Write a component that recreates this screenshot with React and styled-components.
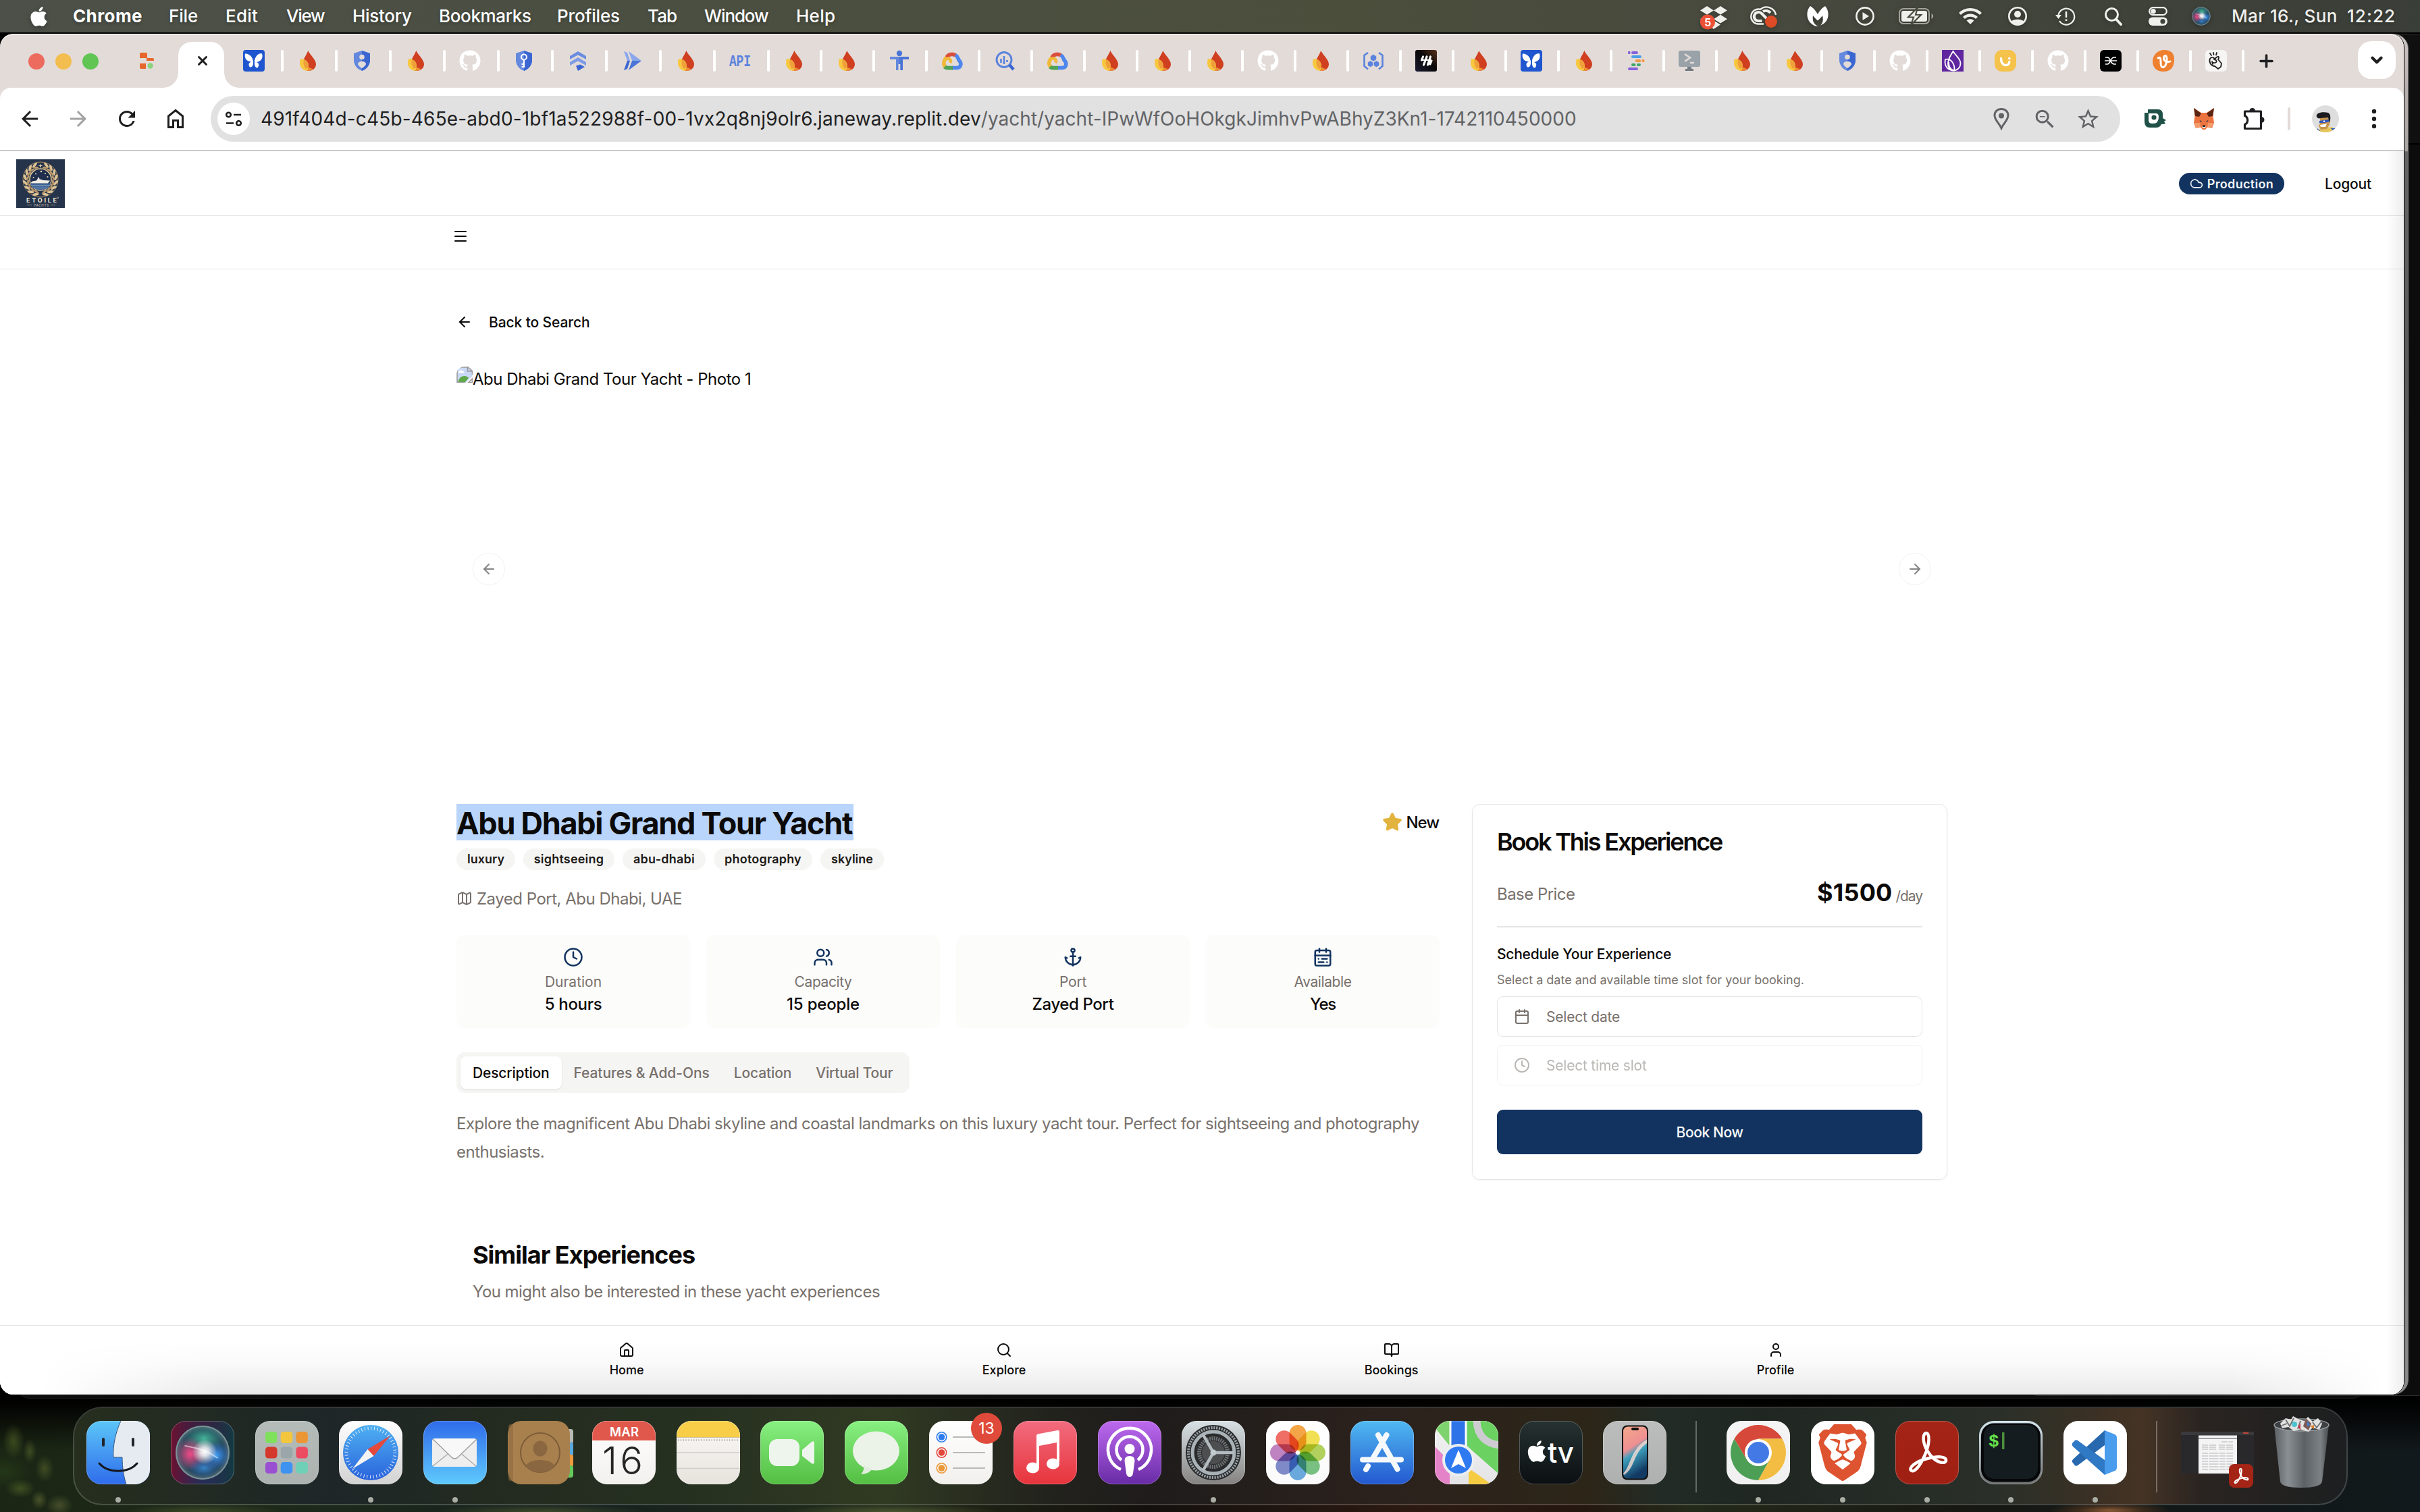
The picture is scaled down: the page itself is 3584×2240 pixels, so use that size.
import React from 'react';
import styled, { createGlobalStyle, css } from 'styled-components';
import { FaApple, FaGithub, FaDropbox } from 'react-icons/fa';
import { SiBrave } from 'react-icons/si';
import { MdArrowBack, MdArrowForward, MdRefresh, MdZoomOut, MdStarOutline } from 'react-icons/md';
import {
  Anchor, ArrowLeft, ArrowRight, BookOpen, Calendar, CalendarRange, Clock, Cloud, House, Map as MapIcon,
  Menu, Search, Star, User, Users, X, Plus, ChevronDown,
} from 'lucide-react';

const GlobalStyle = createGlobalStyle`
  * { box-sizing: border-box; }
  body { margin: 0; overflow: hidden; background: #000; font-family: Inter, "Liberation Sans", sans-serif; }
  h1, h2, h3, p { margin: 0; }
  button { font-family: inherit; }
  svg { display: block; flex: none; }
`;

const ink = '#0c0a09';
const muted = '#78716c';
const navy = '#12335f';
const line = '#e5e5e4';

/* ---------- desktop ---------- */

const Desktop = styled.div`
  position: relative;
  width: 3584px;
  height: 2240px;
  display: flex;
  flex-direction: column;
  overflow: hidden;
  background:
    radial-gradient(ellipse 90px 14px at 3125px 2238px, #8a5a35 0%, rgba(90, 58, 34, 0.6) 50%, transparent 100%),
    radial-gradient(ellipse 16px 26px at 20px 2135px, rgba(84, 102, 38, 0.6), transparent),
    radial-gradient(ellipse 10px 18px at 44px 2150px, rgba(98, 112, 48, 0.5), transparent),
    radial-gradient(ellipse 14px 20px at 66px 2176px, rgba(98, 112, 48, 0.5), transparent),
    radial-gradient(ellipse 22px 14px at 30px 2205px, rgba(70, 90, 36, 0.8), transparent),
    radial-gradient(ellipse 12px 14px at 58px 2222px, rgba(110, 118, 60, 0.55), transparent),
    radial-gradient(ellipse 20px 16px at 88px 2230px, rgba(96, 104, 56, 0.6), transparent),
    radial-gradient(ellipse 40px 26px at 6px 2180px, rgba(36, 56, 24, 0.9), transparent),
    radial-gradient(ellipse 120px 12px at 300px 2240px, rgba(70, 82, 44, 0.8), transparent),
    radial-gradient(ellipse 160px 12px at 800px 2240px, rgba(70, 84, 46, 0.8), transparent),
    radial-gradient(ellipse 160px 12px at 1320px 2240px, rgba(84, 96, 56, 0.8), transparent),
    linear-gradient(to bottom, #000 0, #000 2072px, rgba(0, 0, 0, 0.85) 2086px, transparent 2150px),
    linear-gradient(to right, #1b2614 0, #1d2a1a 400px, #16211f 900px, #222c18 1300px, #14100d 1700px, #2c1a12 2100px,
      #241710 2350px, #232a1a 2500px, #171812 2900px, #121818 3250px, #12191c 3584px);
`;

const MenuBar = styled.header`
  flex: none;
  height: 48px;
  display: flex;
  align-items: center;
  padding-left: 41px;
  color: #fff;
  background: linear-gradient(to right, #4c5048 0, #4b4f41 1000px, #4b4e3b 2000px, #484a3f 2600px, #40433a 3100px, #3a3e38 3584px);
`;

const MenuApple = styled.span`
  width: 67px;
  filter: drop-shadow(0 2px 3px rgba(0, 0, 0, 0.3));
`;

const MenuItem = styled.span`
  width: ${(p) => p.$w}px;
  font-size: 26px;
  line-height: 48px;
  font-weight: ${(p) => (p.$bold ? 700 : 500)};
  letter-spacing: ${(p) => p.$ls}em;
  white-space: pre;
  text-shadow: 0 2px 4px rgba(0, 0, 0, 0.3);
`;

const StatusItems = styled.div`
  margin-left: auto;
  display: flex;
  align-items: center;
  color: #efefec;
`;

const StatusIcon = styled.span`
  width: ${(p) => p.$w}px;
  margin-right: ${(p) => p.$gap}px;
  filter: drop-shadow(0 2px 3px rgba(0, 0, 0, 0.25));
`;

const menus = [
  ['Chrome', 142, 0.015, true],
  ['File', 84, -0.005],
  ['Edit', 90, 0.009],
  ['View', 98, -0.049],
  ['History', 128, -0.011],
  ['Bookmarks', 175, -0.014],
  ['Profiles', 134, -0.007],
  ['Tab', 84, -0.035],
  ['Window', 136, -0.043],
  ['Help', 60, 0.01],
];

const DropboxStatus = () => (
  <svg width="38" height="40" viewBox="0 0 38 40" overflow="visible">
    <FaDropbox x="-1" y="2" size={40} />
    <circle cx="10" cy="28.500" r="11" fill="#ec5037" />
    <text x="10" y="34.500" fontSize="16" fontWeight="700" textAnchor="middle" fill="#fff" fontFamily="Inter, sans-serif">5</text>
  </svg>
);

const CloudStatus = () => (
  <svg width="40" height="34" viewBox="0 0 40 34" fill="none" stroke="currentColor" strokeWidth="3">
    <path d="M20 28.500 H13 A11 11 0 1 1 15.500 7" strokeWidth="2.400" />
    <path d="M15 7 A14 14 0 0 1 38 15" strokeWidth="2.400" />
    <path d="M17.500 24 H13 A6.500 6.500 0 1 1 17 13 L24 20" strokeWidth="4" />
    <path d="M19 10 A9 9 0 0 1 30 12" strokeWidth="4" />
    <circle cx="31" cy="25" r="9" fill="#dc4b25" stroke="none" />
  </svg>
);

const MalwareStatus = () => (
  <svg width="32" height="30" viewBox="0 0 32 30" fill="#fff">
    <path d="M5 0 C-2 7 -2 24 12 29.500 C14 30 16 30 17 29.800 C9 27 8 20 9 14 C11 17 14 20 16 21.500 C18 20 21 17 23 14 C24.500 20 24 25 20 28.500 C34 24 34 7 27 0 C23 2 18 8 16 12 C14 8 9 2 5 0Z" />
  </svg>
);

const PlayStatus = () => (
  <svg width="28" height="28" viewBox="0 0 28 28">
    <circle cx="14" cy="14" r="12.600" fill="none" stroke="currentColor" strokeWidth="2.600" />
    <path d="M10.500 8 L20 14 L10.500 20Z" fill="currentColor" />
  </svg>
);

const BatteryStatus = () => (
  <svg width="52" height="26" viewBox="0 0 52 26">
    <rect x="1" y="2" width="44" height="22" rx="6" fill="none" stroke="#a3a59c" strokeWidth="2" />
    <path d="M48.500 9 C52 11 52 15 48.500 17Z" fill="#a3a59c" />
    <rect x="4" y="5" width="38" height="16" rx="3" fill="currentColor" />
    <path d="M28 0 L14 14.500 H22 L18 26 L33 11 H25Z" fill="currentColor" stroke="#474a3f" strokeWidth="2.200" />
  </svg>
);

const WifiStatus = () => (
  <svg width="34" height="26" viewBox="0 0 34 26" fill="none" stroke="currentColor" strokeWidth="4.200">
    <path d="M1.500 9.500 A22 22 0 0 1 32.500 9.500" />
    <path d="M7.500 15.500 A13.500 13.500 0 0 1 26.500 15.500" />
    <path d="M11.500 19.500 A8 8 0 0 1 22.500 19.500 L17 25Z" fill="currentColor" stroke="none" />
  </svg>
);

const AccountStatus = () => (
  <svg width="28" height="28" viewBox="0 0 28 28">
    <circle cx="14" cy="14" r="12.700" fill="none" stroke="currentColor" strokeWidth="2.600" />
    <circle cx="14" cy="11" r="5" fill="currentColor" />
    <path d="M4 22.500 C7 17.500 21 17.500 24 22.500 A13 13 0 0 1 4 22.500Z" fill="currentColor" />
  </svg>
);

const TimeMachineStatus = () => (
  <svg width="30" height="28" viewBox="0 0 30 28" fill="none" stroke="currentColor" strokeWidth="2.200">
    <path d="M4.500 12 A12 12 0 1 1 6 21" />
    <path d="M0 12 H9 L4.500 18Z" fill="currentColor" stroke="none" />
    <path d="M16 7 V16 M16 18.500 V21" strokeWidth="2.600" />
  </svg>
);

const SearchStatus = () => (
  <svg width="26" height="28" viewBox="0 0 26 28" fill="none" stroke="currentColor" strokeWidth="3">
    <circle cx="10.500" cy="11.500" r="9" />
    <path d="M17 18.500 L24 26" strokeWidth="4" strokeLinecap="round" />
  </svg>
);

const ControlStatus = () => (
  <svg width="28" height="28" viewBox="0 0 28 28">
    <rect x="1.200" y="1.200" width="25.600" height="11" rx="5.500" fill="none" stroke="currentColor" strokeWidth="2.200" />
    <circle cx="7" cy="6.700" r="3.800" fill="currentColor" />
    <rect x="0" y="15.500" width="28" height="12.500" rx="6.200" fill="currentColor" />
    <circle cx="21" cy="21.700" r="3.600" fill="#40433a" />
  </svg>
);

const SiriOrb = ({ size }) => (
  <svg width={size} height={size} viewBox="0 0 80 80">
    <defs>
      <radialGradient id="orbBase" cx="50%" cy="50%" r="50%">
        <stop offset="0" stopColor="#3b3f5c" />
        <stop offset="0.800" stopColor="#24485a" />
        <stop offset="1" stopColor="#5b6a7c" />
      </radialGradient>
      <radialGradient id="orbPink"><stop offset="0" stopColor="#f04a86" /><stop offset="1" stopColor="#f04a86" stopOpacity="0" /></radialGradient>
      <radialGradient id="orbBlue"><stop offset="0" stopColor="#3fa0f5" /><stop offset="1" stopColor="#2f6fe0" stopOpacity="0" /></radialGradient>
      <radialGradient id="orbTeal"><stop offset="0" stopColor="#45b59a" /><stop offset="1" stopColor="#2f8f80" stopOpacity="0" /></radialGradient>
      <radialGradient id="orbWhite"><stop offset="0" stopColor="#fff" /><stop offset="0.350" stopColor="#fff" stopOpacity="0.800" /><stop offset="1" stopColor="#fff" stopOpacity="0" /></radialGradient>
    </defs>
    <circle cx="40" cy="40" r="39" fill="url(#orbBase)" />
    <ellipse cx="42" cy="20" rx="30" ry="20" fill="url(#orbTeal)" />
    <ellipse cx="22" cy="42" rx="22" ry="24" fill="url(#orbPink)" />
    <ellipse cx="60" cy="44" rx="20" ry="20" fill="url(#orbBlue)" />
    <ellipse cx="42" cy="62" rx="22" ry="14" fill="url(#orbBlue)" opacity="0.700" />
    <circle cx="43" cy="39" r="18" fill="url(#orbWhite)" />
    <path d="M14 30 C34 34 44 36 62 48" stroke="#fff" strokeOpacity="0.500" strokeWidth="2" fill="none" />
    <circle cx="40" cy="40" r="38" fill="none" stroke="#8fb3a8" strokeOpacity="0.600" strokeWidth="2" />
  </svg>
);

/* ---------- windows ---------- */

const BackWindow = styled.div`
  position: absolute;
  left: ${(p) => p.$x}px;
  top: ${(p) => p.$y}px;
  width: ${(p) => p.$w}px;
  height: ${(p) => p.$h}px;
  background: ${(p) => p.$bg};
  border-radius: ${(p) => p.$r || 20}px;
  border: 1px solid ${(p) => p.$edge || '#2c2c2c'};
`;

const BrowserWindow = styled.section`
  position: relative;
  flex: none;
  width: 3560px;
  height: 2016px;
  margin-top: 2px;
  display: flex;
  flex-direction: column;
  overflow: hidden;
  border-radius: 20px;
  background: #e3dbd8;
  box-shadow: inset 0 2px 0 #efeae8, 1px 0 0 #000;
`;

const TabStrip = styled.div`
  flex: none;
  height: 80px;
  display: flex;
  align-items: center;
  padding-left: 42px;
`;

const TrafficLights = styled.div`
  display: flex;
  gap: 16px;
  margin-right: 61px;
  padding-top: 2px;
`;

const Light = styled.span`
  width: 24px;
  height: 24px;
  border-radius: 50%;
  background: ${(p) => p.$c};
`;

const flare = css`
  content: '';
  position: absolute;
  bottom: 0;
  width: 22px;
  height: 22px;
`;

const ActiveTab = styled.div`
  position: relative;
  align-self: flex-end;
  width: 68px;
  height: 68px;
  margin: 0 28px 0 36px;
  padding: 0 0 12px 4px;
  display: flex;
  align-items: center;
  justify-content: center;
  border-radius: 20px 20px 0 0;
  background: #fff;
  color: #1f1f1f;
  &::before { ${flare} left: -22px; background: radial-gradient(circle at 0 0, transparent 21.500px, #fff 22px); }
  &::after { ${flare} right: -22px; background: radial-gradient(circle at 100% 0, transparent 21.500px, #fff 22px); }
`;

const PinnedTab = styled.div`
  display: flex;
  align-items: center;
  width: ${(p) => (p.$tight ? 78 : 80)}px;
  gap: ${(p) => (p.$tight ? 22 : 24)}px;
  &::after { content: ''; width: 4px; height: 32px; border-radius: 2px; background: #fff; }
`;

const NewTab = styled.span`
  margin-left: -2px;
  color: #1f1f22;
`;

const TabSearch = styled.button`
  margin: -2px 12px 0 auto;
  width: 56px;
  height: 56px;
  display: grid;
  place-items: center;
  border: 0;
  padding: 0;
  border-radius: 20px;
  background: #fff;
  color: #1f1f1f;
`;

const Toolbar = styled.div`
  flex: none;
  height: 94px;
  display: flex;
  align-items: center;
  padding: 0 0 0 26px;
  border-bottom: 2px solid #cacaca;
  border-radius: 16px 16px 0 0;
  background: #fff;
  color: #1f1f1f;
`;

const NavIcon = styled.span`
  width: 36px;
  margin-right: 36px;
  color: ${(p) => (p.$off ? '#a2a2a2' : '#1f1f1f')};
`;

const Omnibox = styled.div`
  width: 2828px;
  height: 68px;
  margin-left: -2px;
  padding-left: 10px;
  display: flex;
  align-items: center;
  border-radius: 34px;
  background: #e1e1e1;
`;

const SiteInfo = styled.span`
  width: 48px;
  height: 48px;
  display: grid;
  place-items: center;
  border-radius: 50%;
  background: #fff;
`;

const Url = styled.span`
  margin-left: 16px;
  font-size: 28px;
  line-height: 68px;
  white-space: nowrap;
  color: #1f1f22;
  letter-spacing: 0.0061em;
  em { font-style: normal; color: #626366; letter-spacing: 0.0007em; }
`;

const OmniIcons = styled.div`
  margin-left: auto;
  padding-right: 29px;
  display: flex;
  align-items: center;
  gap: 27px;
  color: #626366;
  svg:first-child { margin-right: 7px; }
`;

const Extensions = styled.div`
  display: flex;
  align-items: center;
  padding-left: 36px;
`;

const Ext = styled.span`
  margin-right: ${(p) => p.$gap}px;
`;

const ToolDivider = styled.span`
  width: 4px;
  height: 34px;
  margin-right: 32px;
  border-radius: 2px;
  background: #e3dbd8;
`;

/* ---------- favicons ---------- */

const Fire = () => (
  <svg width="32" height="32" viewBox="0 0 32 32">
    <path d="M16.300 1 C18 6 28 14 28 21 C28 27 23 31 17 31 C11 31 8 27 8 21 C8 14 14 8 16.300 1Z" fill="#cf3f20" />
    <path d="M6 13 C13 13 17 18 17 24 C17 28 16 30 15 31 C8 30 4 26 4 19 C4 15 5 13 6 13Z" fill="#f7c740" />
    <path d="M10 14 C15 16 17.500 20 17 26 C17 28 16 30 15.500 31 C20 31 21 30 24 28 C20 27.500 19 26 17 26 C16 20 13 16 10 14Z" fill="#ee9135" />
    <path d="M10 14 C9 18 9 23 13 28 C15 27 17 27 17 24 C17 19 14 15 10 14Z" fill="#f0a03a" />
  </svg>
);
const shield = 'M16 1 L28 5 V15 C28 23 22 29 16 31 C10 29 4 23 4 15 V5Z';
const ShieldUser = () => (
  <svg width="32" height="32" viewBox="0 0 32 32">
    <path d={shield} fill="#6388dd" /><path d="M16 1 L28 5 V15 C28 23 22 29 16 31Z" fill="#3b66d1" />
    <circle cx="16" cy="10.500" r="3.800" fill="#e3dbd8" /><path d="M10 21 C10 15.500 22 15.500 22 21 C20 25 17 26.500 16 27 C15 26.500 12 25 10 21Z" fill="#e3dbd8" />
  </svg>
);
const ShieldKey = () => (
  <svg width="32" height="32" viewBox="0 0 32 32">
    <path d={shield} fill="#6388dd" /><path d="M16 1 L28 5 V15 C28 23 22 29 16 31Z" fill="#3b66d1" />
    <circle cx="16" cy="10.500" r="4" fill="none" stroke="#fff" strokeWidth="2.200" />
    <path d="M16 14.500 V26 M16 21 H12.500 M16 25 H12.500" stroke="#fff" strokeWidth="2.200" />
  </svg>
);
const Octocat = () => <FaGithub size={32} color="#fff" />;
const Butterfly = () => (
  <svg width="32" height="32" viewBox="0 0 32 32">
    <rect width="32" height="32" rx="4" fill="#1f56cf" />
    <path d="M15.300 18 C15 12 10 5 3 5.500 C1.500 12 5 17 12 17.500 C8 19 7.500 22 10 25.500 C13.500 26 15 23 15.300 18Z M16.700 18 C17 11 22 4 28 5.500 C30 12 27 17 20 18 C24 19.500 24 23 21.500 26.500 C18 27 17 23 16.700 18Z" fill="#fff" />
    <path d="M16 17 L14 8 M16 17 V29" stroke="#1f56cf" strokeWidth="1.800" />
  </svg>
);
const Layers = () => (
  <svg width="32" height="32" viewBox="0 0 32 32">
    <path d="M4 9 L16 2 L28 9 V14 L16 7.500 L4 14Z" fill="#6a8de0" /><path d="M4 18 L16 11 L28 18 V23 L16 16.500 L4 23Z" fill="#7d9ce5" />
    <path d="M13 23.500 L19 21.500 L26 25 L16 31 Z" fill="#3b66d1" />
  </svg>
);
const FastForward = () => (
  <svg width="32" height="32" viewBox="0 0 32 32">
    <path d="M4 2 L9 4 L13 16 H9Z" fill="#8aa7ec" /><path d="M4 30 L9 28 L13 16 H9Z" fill="#3b66d1" />
    <path d="M11 2 L30 16 H16Z" fill="#8aa7ec" /><path d="M11 30 L30 16 H16Z" fill="#4a74d6" />
  </svg>
);
const Api = () => (
  <svg width="32" height="32" viewBox="0 0 32 32">
    <text transform="scale(1 1.350)" x="0" y="18" fontSize="18" fontWeight="700" fontFamily="'Liberation Mono', monospace" fill="#5b83dd" textLength="32">API</text>
  </svg>
);
const Figure = () => (
  <svg width="32" height="32" viewBox="0 0 32 32" fill="#4a74d6">
    <circle cx="16" cy="5" r="4.200" /><path d="M2 10 H30 V14 H21 V30 H17.500 V21 H14.500 V30 H11 V14 H2Z" fill="#6388dd" /><path d="M16 10 H30 V14 H21 V30 H17.500 V21 H16Z" />
  </svg>
);
const GCloud = () => (
  <svg width="32" height="32" viewBox="0 0 32 32" fill="none" strokeWidth="5.600">
    <path d="M7.500 12 A9 9 0 0 1 21 8" stroke="#d94f3d" /><path d="M21 7.500 C25 10 25 13 26 15 C31 20 29 26.500 23 26.500 H16" stroke="#4d86ec" />
    <path d="M8 12 C4 14 2 21 6 25" stroke="#f0b93b" /><path d="M5 25 C7 27 10 26.600 17 26.600" stroke="#4fa353" /><path d="M8 13.500 C11 11 16 15 13 19" stroke="#f0b93b" strokeWidth="4.500" />
  </svg>
);
const Query = () => (
  <svg width="32" height="32" viewBox="0 0 32 32" fill="none" stroke="#5b83dd">
    <circle cx="15" cy="14.500" r="11" strokeWidth="3" /><path d="M23 22 L29 29" strokeWidth="4.500" stroke="#3b66d1" /><path d="M10.500 13 V19 M15 9 V21 M19.500 15 V18" strokeWidth="2.600" />
  </svg>
);
const Artifact = () => (
  <svg width="32" height="32" viewBox="0 0 32 32" fill="none" stroke="#5b83dd" strokeWidth="2.600">
    <path d="M8 4 L2.500 8 V24 L8 28.500 M24 4 L29.500 8 V24 L24 28.500" /><path d="M16 7 L20 9.500 V14 L16 16.500 L12 14 V9.500Z M11.500 16.500 L15 18.500 V23 L11.500 25 L8 23 V18.500Z M20.500 16.500 L24 18.500 V23 L20.500 25 L17 23 V18.500Z" fill="#5b83dd" strokeWidth="0.500" />
  </svg>
);
const DarkMark = () => (
  <svg width="32" height="32" viewBox="0 0 32 32">
    <defs><linearGradient id="dm" x1="1" y1="0" x2="0" y2="1"><stop offset="0" stopColor="#5a331a" /><stop offset="0.450" stopColor="#0a0808" /><stop offset="1" stopColor="#1b1a33" /></linearGradient></defs>
    <rect width="32" height="32" rx="3" fill="url(#dm)" /><path d="M11.500 10 L9.500 15 M17 10 L12.500 22 M22.500 10 L18.500 22 M24 16 L22 21" stroke="#fff" strokeWidth="3.200" strokeLinecap="round" /><path d="M8.500 15 H23" stroke="#fff" strokeWidth="1.800" />
  </svg>
);
const Logs = () => (
  <svg width="32" height="32" viewBox="0 0 32 32">
    <rect x="3" y="2" width="3.500" height="4" rx="1" fill="#8562dd" /><rect x="8" y="2" width="10" height="4" rx="2" fill="#8562dd" /><rect x="8" y="8" width="15" height="4" rx="2" fill="#4b9fe8" />
    <rect x="14" y="14" width="8" height="4" rx="1.500" fill="#f2994a" /><rect x="23.500" y="14" width="4" height="4" rx="1" fill="#f2994a" />
    <rect x="8" y="20" width="6.500" height="4" rx="2" fill="#3fa66a" /><rect x="16" y="20" width="6" height="4" rx="2" fill="#3fa66a" /><rect x="3" y="26" width="15" height="4" rx="2" fill="#8562dd" />
  </svg>
);
const Monitor = () => (
  <svg width="32" height="32" viewBox="0 0 32 32">
    <rect x="0" y="1" width="32" height="24" rx="3" fill="#9aa2a9" /><path d="M13 25 H19 V28 H22 V31 H10 V28 H13Z" fill="#737b82" />
    <path d="M9 6 L17 11.500 L9 17" fill="none" stroke="#e3dbd8" strokeWidth="2.600" /><path d="M17 19 H23" stroke="#e3dbd8" strokeWidth="2.600" />
  </svg>
);
const PurpleDrop = () => (
  <svg width="32" height="32" viewBox="0 0 32 32">
    <rect width="32" height="32" fill="#5f269f" />
    <g fill="none" stroke="#fff" strokeWidth="1.800"><path d="M16.500 2 C13 8 9 13 9 20 C9 27 13 30.500 17 30.500 C23 30.500 27.500 26 27.500 19.500 C27.500 13 20 8 16.500 2Z" /><path d="M5 14 C13 12 19 20 18.500 30 C9 31 3 24 5 14Z" /><path d="M10 18 C10 24 12 28 16 30" /></g>
  </svg>
);
const Smile = () => (
  <svg width="32" height="32" viewBox="0 0 32 32"><rect width="32" height="32" rx="11" fill="#f5c24c" /><path d="M9.500 12.500 C9.500 25 21.500 25 21.800 17.500" fill="none" stroke="#fff" strokeWidth="3.400" strokeLinecap="round" /><circle cx="21.800" cy="12.600" r="1.900" fill="#fff" /></svg>
);
const BlackMark = () => (
  <svg width="32" height="32" viewBox="0 0 32 32"><rect width="32" height="32" rx="6" fill="#000" /><path d="M8 11 H11 C16 11 15 21 21 21 H24 M8 21 H11 C16 21 15 11 21 11 H24 M7 16 H25" fill="none" stroke="#fff" strokeWidth="1.700" /></svg>
);
const OrangeMark = () => (
  <svg width="32" height="32" viewBox="0 0 32 32"><path d="M17 0 C26 0 32 4 32 14 C32 25 27 32 16 32 C6 32 0 26 0 17 C0 8 7 0 17 0Z" fill="#ee8030" /><path d="M8 12 C11 10 12 12 12 17 C12 25 14 27 17 25 C21 22 22 12 20 9 C17 7 15 13 18 16 C20 18 24 18 26 17" fill="none" stroke="#fff" strokeWidth="3" strokeLinecap="round" /></svg>
);
const HandMark = () => (
  <svg width="32" height="32" viewBox="0 0 32 32"><rect width="32" height="32" rx="6" fill="#f7f5f3" /><g fill="none" stroke="#222" strokeWidth="1.800" strokeLinecap="round" strokeLinejoin="round"><path d="M7 5 L9 8 M12 4 L12.500 7 M17 4 L16 7.500" /><path d="M7 13 C9 10 12 11 14 13 L18 10 C21 9 20 13 19 14 L24 20 L23 25 L19 28 M7 13 C5 17 8 24 14 24 L19 28 M13 14 C18 15 18 20 12 19 M10 17 L11 21" /></g></svg>
);

const pinned = [
  Butterfly, Fire, ShieldUser, Fire, Octocat, ShieldKey, Layers, FastForward, Fire, Api, Fire, Fire, Figure, GCloud, Query,
  GCloud, Fire, Fire, Fire, Octocat, Fire, Artifact, DarkMark, Fire, Butterfly, Fire, Logs, Monitor, Fire, Fire, ShieldUser,
  Octocat, PurpleDrop, Smile, Octocat, BlackMark, OrangeMark, HandMark,
];

const ReplitMark = () => (
  <svg width="21" height="24" viewBox="0 0 21 24">
    <path d="M0 2 Q0 0 2 0 H9 Q11 0 11 2 V8 H0Z" fill="#e5672c" /><path d="M10 8 H19 Q21 8 21 10 V12 H10Z" fill="#e5672c" />
    <path d="M0 16 H9 V24 H2 Q0 24 0 22Z" fill="#e5672c" /><circle cx="15.500" cy="19.500" r="4.200" fill="#8ad37f" />
  </svg>
);

const HomeNav = () => (
  <svg width="36" height="36" viewBox="0 0 36 36" fill="none" stroke="currentColor" strokeWidth="3">
    <path d="M7.500 30.500 V14 L18 5.500 L28.500 14 V30.500 H21.500 V20.500 H14.500 V30.500Z" />
  </svg>
);
const Tune = () => (
  <svg width="26" height="26" viewBox="0 0 26 26" fill="none" stroke="#1f1f1f" strokeWidth="2.600">
    <circle cx="5.500" cy="7" r="3.300" /><path d="M13 7 H24" /><circle cx="20.500" cy="19.500" r="3.300" /><path d="M2 19.500 H13" />
  </svg>
);
const Pin = () => (
  <svg width="24" height="34" viewBox="0 0 24 34"><path d="M12 2.500 C6 2.500 2 6.500 2 12 C2 19 9 23.500 12 31 C15 23.500 22 19 22 12 C22 6.500 18 2.500 12 2.500Z" fill="none" stroke="currentColor" strokeWidth="3" /><circle cx="12" cy="12.500" r="4" fill="currentColor" /></svg>
);
const GreenExt = () => (
  <svg width="32" height="28" viewBox="0 0 32 28"><path d="M5 0 H20 Q27 0 27 8 V13 L32 16 L29 18 L31 21.500 L25 22 Q23 27 17 27 H8 Q0 27 0 18 V5 H5Z" fill="#1f5148" /><path d="M6 6 H17 Q21 6 21 11 Q21 21 13 21 H11 Q6 21 6 16Z" fill="#fff" /><circle cx="14" cy="12" r="3.600" fill="#1f5148" /></svg>
);
const Fox = () => (
  <svg width="30" height="32" viewBox="0 0 30 32">
    <path d="M0 0 L11 7 H19 L30 0 L28.500 12 L30 22 L27 30 L20 28.500 L17 32 H13 L10 28.500 L3 30 L0 22 L1.500 12Z" fill="#ec7440" />
    <path d="M0 0 L11 8 L8 13 L2 12Z M30 0 L19 8 L22 13 L28 12Z" fill="#5a2613" />
    <path d="M1 22 L9 22 L10 28.500 L3 30Z M29 22 L21 22 L20 28.500 L27 30Z" fill="#f59a6c" />
    <path d="M8.500 18 L12 19.500 L10 21Z M21.500 18 L18 19.500 L20 21Z" fill="#2c3a46" /><path d="M12 27 H18 L17 30 H13Z" fill="#e6dcd5" /><path d="M13 25.500 H17 V28 H13Z" fill="#222" />
  </svg>
);
const Puzzle = () => (
  <svg width="34" height="36" viewBox="0 0 34 36"><path d="M3.500 7 H27.500 V32.500 H3.500 V26.500 C9 24 9 16 3.500 13.500Z" fill="none" stroke="#1f1f22" strokeWidth="3.200" strokeLinejoin="round" /><path d="M10.500 6 C10.500 0.500 19 0.500 19 6Z M28 15 C34 15 34 24 28 24Z" fill="#1f1f22" /></svg>
);
const Avatar = () => (
  <svg width="40" height="40" viewBox="0 0 40 40">
    <defs><clipPath id="av"><circle cx="20" cy="20" r="20" /></clipPath></defs>
    <g clipPath="url(#av)"><rect width="40" height="40" fill="#dedede" /><path d="M8 40 L12 34 L30 32 L34 40Z" fill="#e7c659" /><path d="M8 34 L14 40 H8Z M28 34 L34 34 L33 40Z" fill="#3560b8" />
      <path d="M12 17 L26 15 V29 L22 35 L13 36 L10 31 L12 26Z" fill="#c79550" /><path d="M7 17 C5 12 14 9 24 11 C28 13 28 20 26 26 L24 18 L13 19 C10 20 8 19 7 17Z" fill="#1b1a1d" />
      <path d="M11 23 L25 21 V24.500 L18 26 L11 26Z" fill="#2d55c0" /><circle cx="18" cy="23.800" r="1.300" fill="#fff" /><path d="M12 29 L22 27.500 L20 32 H13Z" fill="#fff" /></g>
  </svg>
);
const Dots = () => (
  <svg width="8" height="32" viewBox="0 0 8 32" fill="#1f1f22"><circle cx="4" cy="5" r="3.200" /><circle cx="4" cy="16" r="3.200" /><circle cx="4" cy="27" r="3.200" /></svg>
);

/* ---------- yacht page ---------- */

const Page = styled.div`
  position: relative;
  flex: 1;
  min-height: 0;
  display: flex;
  flex-direction: column;
  background: #fff;
  color: ${ink};
`;

const Text = styled.span`
  margin-top: ${(p) => p.$mt || 0}px;
  font-size: ${(p) => p.$s || 24}px;
  font-weight: ${(p) => p.$w || 400};
  letter-spacing: ${(p) => p.$ls || 0}em;
  line-height: ${(p) => p.$lh || 36}px;
  color: ${(p) => p.$c || ink};
  white-space: nowrap;
  transform: translateY(1px);
`;

const SiteHeader = styled.header`
  flex: none;
  height: 96px;
  display: flex;
  align-items: center;
  justify-content: space-between;
  padding: 0 48px 0 24px;
  border-bottom: 1px solid ${line};
`;

const Account = styled.div`
  display: flex;
  align-items: center;
  gap: 60px;
`;

const EnvBadge = styled.span`
  display: flex;
  align-items: center;
  justify-content: center;
  gap: 6px;
  width: 156px;
  height: 32px;
  border-radius: 16px;
  background: ${navy};
  color: #f3f5f8;
`;

const SubHeader = styled.div`
  flex: none;
  height: 79px;
  padding: 18px 0 0 670px;
  border-bottom: 1px solid ${line};
`;

const Content = styled.main`
  flex: 1;
  min-height: 0;
  overflow: hidden;
  padding: 48px 676px 0;
`;

const BackLink = styled.a`
  display: flex;
  align-items: center;
  gap: 24px;
  height: 60px;
  margin-bottom: 36px;
`;

const Gallery = styled.div`
  position: relative;
  display: flex;
  width: 2208px;
  height: 600px;
  margin-bottom: 48px;
`;

const SlideButton = styled.button`
  position: absolute;
  top: 276px;
  ${(p) => p.$side}: 24px;
  width: 48px;
  height: 48px;
  padding: 0;
  display: grid;
  place-items: center;
  border: 1px solid #f2f2f1;
  border-radius: 50%;
  background: #fff;
  color: #858484;
`;

const Columns = styled.div`
  width: 2208px;
  height: 556px;
  display: grid;
  grid-template-columns: 1456px 704px;
  gap: 48px;
`;

const TitleRow = styled.div`
  display: flex;
  justify-content: space-between;
  height: 54px;
`;

const Title = styled.h1`
  height: 54px;
  font-size: 45px;
  line-height: 57px;
  font-weight: 700;
  letter-spacing: -0.0286em;
  background: #b9d5fb;
  width: 588px;
  white-space: nowrap;
`;

const Rating = styled.div`
  display: flex;
  align-items: center;
  gap: 5px;
  padding-right: 1px;
`;

const Tags = styled.div`
  display: flex;
  gap: 12px;
  margin-top: 12px;
`;

const Tag = styled.span`
  height: 32px;
  width: ${(p) => p.$w}px;
  text-align: center;
  border-radius: 16px;
  background: #f5f5f4;
  font-size: 18px;
  line-height: 32px;
  font-weight: 600;
  letter-spacing: ${(p) => p.$ls}em;
  color: #1c1917;
`;

const Location = styled.div`
  display: flex;
  align-items: center;
  gap: 6px;
  margin: 24px 0 36px;
  color: ${muted};
`;

const Stats = styled.div`
  display: grid;
  grid-template-columns: repeat(4, 1fr);
  gap: 24px;
  margin-bottom: 36px;
`;

const Stat = styled.div`
  height: 138px;
  padding-top: 18px;
  display: flex;
  flex-direction: column;
  align-items: center;
  border-radius: 12px;
  background: #fcfcfb;
  svg { color: ${navy}; margin-bottom: 6px; }
`;

const TabList = styled.div`
  display: flex;
  align-items: center;
  height: 60px;
  width: 671px;
  padding: 0 6px;
  border-radius: 12px;
  background: #f5f5f4;
`;

const Tab = styled.span`
  height: 48px;
  padding: 0 18px;
  display: flex;
  align-items: center;
  border-radius: 8px;
  ${(p) => p.$active && 'background:#fff; box-shadow: 0 1px 3px rgba(0,0,0,.09);'}
`;

const Description = styled.p`
  margin-top: 25px;
  font-size: 24px;
  line-height: 42px;
  letter-spacing: -0.0212em;
  color: ${muted};
`;

const BookingCard = styled.aside`
  height: 557px;
  padding: 29px 36px 0;
  display: flex;
  flex-direction: column;
  border: 1px solid ${line};
  border-radius: 12px;
  box-shadow: 0 1px 3px rgba(0, 0, 0, 0.05);
`;

const PriceRow = styled.div`
  display: flex;
  align-items: center;
  justify-content: space-between;
  height: 54px;
  margin: 26px 0 21px;
`;

const Price = styled.span`
  display: flex;
  align-items: baseline;
  gap: 5px;
`;

const Divider = styled.hr`
  width: 100%;
  height: 2px;
  margin: 0 0 24px;
  border: 0;
  background: ${line};
`;

const Picker = styled.button`
  height: 60px;
  margin-top: 12px;
  padding: 0 24px;
  display: flex;
  align-items: center;
  gap: 24px;
  border: 1px solid ${line};
  border-radius: 9px;
  background: #fff;
  color: ${muted};
  opacity: ${(p) => (p.$disabled ? 0.5 : 1)};
`;

const BookButton = styled.button`
  height: 66px;
  margin-top: 36px;
  display: flex;
  align-items: center;
  justify-content: center;
  border: 0;
  border-radius: 9px;
  background: ${navy};
`;

const Similar = styled.section`
  padding-left: 24px;
  margin-top: 84px;
  display: flex;
  flex-direction: column;
`;

const BottomNav = styled.nav`
  flex: none;
  height: 103px;
  padding: 24px 652px 0;
  display: flex;
  justify-content: space-around;
  border-top: 1px solid ${line};
  background:
    linear-gradient(to right, #fff 60px, rgba(255, 255, 255, 0) 330px),
    linear-gradient(to left, #fff 30px, rgba(255, 255, 255, 0) 260px),
    linear-gradient(to bottom, #fff 22px, #fafafa 55px, #e9e9e9 103px);
`;

const NavItem = styled.a`
  display: flex;
  flex-direction: column;
  align-items: center;
  gap: 3px;
`;

const EdgeShade = styled.div`
  position: absolute;
  inset: 0 0 0 auto;
  width: 26px;
  background: linear-gradient(to left, rgba(0, 0, 0, 0.07), rgba(0, 0, 0, 0));
`;

const leaves = [...Array(8).keys()].flatMap((i) => [22 + i * 20, -22 - i * 20]);

const SiteLogo = () => (
  <svg width="72" height="72" viewBox="0 0 72 72">
    <rect width="72" height="72" fill="#26344b" />
    <circle cx="36" cy="30" r="26" fill="none" stroke="#a9895e" strokeWidth="1" />
    {leaves.map((a) => (
      <g key={a} transform={`rotate(${a} 36 30)`}>
        <ellipse cx="36" cy="7" rx="1.900" ry="4.800" fill="#dcc294" transform={`rotate(${a > 0 ? -60 : 60} 36 7)`} />
        <ellipse cx="36" cy="11" rx="1.500" ry="4.200" fill="#b8976a" transform={`rotate(${a > 0 ? -110 : 110} 36 11)`} />
      </g>
    ))}
    <circle cx="36" cy="30" r="16" fill="#1f2f4d" stroke="#dcc294" strokeWidth="1.600" />
    <path d="M21 35.500 H51 C50 42 44 45.500 36 45.500 C28 45.500 22 42 21 35.500Z" fill="#3f6496" />
    <path d="M22.500 39 H49.500 M25.500 42.500 H46.500" stroke="#a9bdd6" strokeWidth="0.800" />
    <path d="M21.500 35 L24 32.500 L30 31.500 L32 28.500 L40 31 L50 31.500 L47 35.500 H23Z M31.500 29 L33.500 26 L34.500 29Z" fill="#f1ede4" />
    <path d="M36 6.500 L36.800 9 L39.500 9.500 L36.800 10.200 L36 13 L35.200 10.200 L32.500 9.500 L35.200 9Z" fill="#f0dfb6" />
    <g fill="#f0dfb6"><circle cx="37" cy="18" r="1.300" /><circle cx="29" cy="21.500" r="1" /><circle cx="43" cy="21" r="1" /><circle cx="25.500" cy="27" r="1" /><circle cx="46.500" cy="26" r="1" /></g>
    <text x="15" y="64" fontSize="9" fontWeight="700" textLength="45" fill="#efe9dc" fontFamily="Inter, sans-serif">ETOILE</text>
    <text x="26" y="69.500" fontSize="4.500" fontWeight="600" textLength="22" fill="#b8b3a8" fontFamily="Inter, sans-serif">YACHTS</text>
    <path d="M16 67.800 H23 M51 67.800 H58" stroke="#8f8b84" strokeWidth="0.800" /><circle cx="61.500" cy="57" r="1.200" fill="none" stroke="#d9d3c6" strokeWidth="0.600" />
  </svg>
);

const BrokenImage = () => (
  <svg width="24" height="24" viewBox="0 0 24 24">
    <defs><clipPath id="bi"><path d="M0 24 V12 A12 12 0 0 1 12 0 H24 V24Z" /></clipPath></defs>
    <g clipPath="url(#bi)"><path d="M1 1 H17 L23.500 7 V14 L14 24 H1Z" fill="#c9d8f5" /><path d="M3 8 C5 5 8 5 9 7 C12 7 12 9 11 9.500 H3Z" fill="#fff" />
      <path d="M2 24 C4 13 14 12 18 17 L12 24Z" fill="#5ea848" /><path d="M1 24 V1 H17 M16.500 0.500 V7 H24 L16.500 0.500 M23.500 7 V12 M1 23.500 H12 M18 23.500 H23.500 V18Z" fill="none" stroke="#9a9a9a" strokeWidth="1.600" /></g>
  </svg>
);

const tags = [['luxury', 87, 0], ['sightseeing', 135, 0.011], ['abu-dhabi', 123, 0.013], ['photography', 146, 0.012], ['skyline', 94, 0]];
const stats = [
  [Clock, 'Duration', '5 hours', 0, -0.013],
  [Users, 'Capacity', '15 people', -0.02, -0.008],
  [Anchor, 'Port', 'Zayed Port', -0.01, -0.017],
  [CalendarRange, 'Available', 'Yes', -0.02, -0.05],
];
const tabs = [['Description', -0.008, true], ['Features & Add-Ons', -0.0036], ['Location', -0.006], ['Virtual Tour', -0.011]];
const nav = [[House, 'Home'], [Search, 'Explore'], [BookOpen, 'Bookings'], [User, 'Profile']];

/* ---------- dock ---------- */

const DockBar = styled.footer`
  position: relative;
  flex: none;
  width: 3369px;
  height: 146px;
  margin: 18px 0 0 108px;
  padding: 19px 0 0 18px;
  display: flex;
  align-items: flex-start;
  gap: 30.800px;
  border: 2px solid rgba(255, 255, 255, 0.2);
  border-radius: 44px;
  background: linear-gradient(to right, #262e1e 0, #1e2628 380px, #232b20 620px, #263020 900px, #303a22 1200px, #22221d 1450px,
    #1f1c1b 1600px, #2c221d 1950px, #2c2618 2250px, #222b26 2350px, #202722 2500px, #2a3029 2850px, #3c3024 3000px,
    #453425 3060px, #2a2421 3150px, #1c1f20 3369px) padding-box;
`;

const DockItem = styled.div`
  position: relative;
  flex: none;
  width: ${(p) => p.$w || 94}px;
  margin-top: ${(p) => p.$mt || 0}px;
  ${(p) => p.$running && css`
    &::after {
      content: '';
      position: absolute;
      left: calc(50% - 4px);
      top: 113px;
      width: 8px;
      height: 8px;
      border-radius: 50%;
      background: #a9ada4;
    }
  `}
`;

const DockDivider = styled.span`
  flex: none;
  width: 2px;
  height: 106px;
  margin: 0 ${(p) => p.$r}px 0 12px;
  background: rgba(255, 255, 255, 0.3);
`;

const Count = styled.span`
  position: absolute;
  top: -12px;
  right: -14px;
  width: 46px;
  height: 46px;
  border-radius: 50%;
  background: #e04a3a;
  color: #fff;
  font-size: 23px;
  line-height: 46px;
  text-align: center;
`;

const Tile = ({ id, from, to, children }) => (
  <svg width="94" height="94" viewBox="0 0 94 94">
    <defs>
      <linearGradient id={`${id}-bg`} x1="0" y1="0" x2="0" y2="1"><stop offset="0" stopColor={from} /><stop offset="1" stopColor={to} /></linearGradient>
      <clipPath id={`${id}-clip`}><rect width="94" height="94" rx="22" /></clipPath>
    </defs>
    <g clipPath={`url(#${id}-clip)`}><rect width="94" height="94" fill={`url(#${id}-bg)`} />{children}</g>
    <rect x="0.500" y="0.500" width="93" height="93" rx="21.500" fill="none" stroke="#fff" strokeOpacity="0.250" />
  </svg>
);

const Finder = () => (
  <Tile id="finder" from="#5cc6f8" to="#2f6cec">
    <path d="M51 0 C43 18 39 36 40 54 H53 C53 68 55 82 59 94 H94 V0Z" fill="#e6ebf2" />
    <path d="M51 0 C43 18 39 36 40 54 H53 C53 68 55 82 59 94" fill="none" stroke="#35567c" strokeWidth="1" />
    <path d="M25 27 V36 M69 27 V36" stroke="#20242b" strokeWidth="4" strokeLinecap="round" /><path d="M19 63 C32 78 62 78 75 63" fill="none" stroke="#15181d" strokeWidth="3" strokeLinecap="round" />
  </Tile>
);
const Siri = () => (
  <Tile id="siri" from="#3b1c35" to="#1a3566">
    <defs><linearGradient id="siri-side"><stop offset="0" stopColor="#6e1030" /><stop offset="0.500" stopColor="#31254a" stopOpacity="0.500" /><stop offset="1" stopColor="#123b42" /></linearGradient></defs>
    <rect width="94" height="94" fill="url(#siri-side)" /><g transform="translate(6 6)"><SiriOrb size={82} /></g>
  </Tile>
);
const padColors = ['#7fe05c', '#f3c63e', '#ec9535', '#d4382c', '#9ba6aa', '#ec4b62', '#9a4fd2', '#3e93f0', '#6fd0b8'];
const Launchpad = () => (
  <Tile id="launchpad" from="#b4bbb9" to="#acb2b0">
    {padColors.map((c, i) => <rect key={c} x={15 + (i % 3) * 22.700} y={16 + Math.floor(i / 3) * 22.500} width="17.500" height="17" rx="4.500" fill={c} />)}
  </Tile>
);
const Safari = () => (
  <Tile id="safari" from="#ffffff" to="#d2d2d2">
    <defs><linearGradient id="safari-sky" x1="0" y1="0" x2="0" y2="1"><stop offset="0" stopColor="#4fb0f2" /><stop offset="1" stopColor="#2a63dc" /></linearGradient></defs>
    <circle cx="47" cy="47" r="41" fill="url(#safari-sky)" /><circle cx="47" cy="47" r="36" fill="none" stroke="#fff" strokeOpacity="0.850" strokeWidth="5" strokeDasharray="1 3.712" />
    <path d="M76 22 L42.500 42 L51.500 52Z" fill="#e5493c" /><path d="M20 71 L42.500 42 L51.500 52Z" fill="#f4f4f4" />
  </Tile>
);
const Mail = () => (
  <Tile id="mail" from="#2f6bea" to="#5fcafd">
    <rect x="13" y="26" width="66" height="42" rx="4" fill="#eeeeee" /><path d="M14 67 L40 46 M78 67 L53 46" stroke="#a9a9a9" strokeWidth="1.300" />
    <path d="M14 27 L42 54 Q46.500 58 51 54 L79 27" fill="#f8f8f8" stroke="#9d9d9d" strokeWidth="1.300" />
  </Tile>
);
const Contacts = () => (
  <svg width="98" height="94" viewBox="0 0 98 94">
    <rect x="80" y="12" width="17" height="22" rx="4" fill="#b9b9b4" /><rect x="80" y="32" width="17" height="20" rx="3" fill="#5aa9dc" /><rect x="80" y="50" width="17" height="18" rx="3" fill="#ee9a3c" /><rect x="80" y="66" width="17" height="18" rx="4" fill="#63c95c" />
    <rect width="92" height="94" rx="20" fill="#a8804e" /><rect width="7" height="84" y="5" x="1" rx="4" fill="#8f6b40" opacity="0.600" />
    <circle cx="48" cy="47" r="29" fill="none" stroke="#7d5c38" strokeWidth="2" /><ellipse cx="48" cy="41" rx="10.500" ry="11.500" fill="#8a6740" /><path d="M27 67 C30 55 66 55 69 67 C60 79 36 79 27 67Z" fill="#8a6740" />
  </svg>
);
const CalendarTile = () => (
  <Tile id="calendar" from="#ffffff" to="#f3f1ee">
    <rect width="94" height="29" fill="#e0574b" /><text x="26" y="22.700" fontSize="18.500" fontWeight="600" fill="#fff" fontFamily="Inter, sans-serif" textLength="43">MAR</text>
    <text x="15" y="79" fontSize="56" fontWeight="300" fill="#262626" fontFamily="Inter, sans-serif" textLength="60">16</text>
  </Tile>
);
const Notes = () => (
  <Tile id="notes" from="#fbfaf9" to="#e7e2dc">
    <rect width="94" height="24" fill="#f8cd48" /><path d="M0 24.500 H94" stroke="#a58a3f" strokeOpacity="0.500" /><path d="M2 28.500 H92" stroke="#b9b5ae" strokeWidth="2.500" strokeDasharray="1.500 2.300" /><path d="M0 47 H94 M0 70.500 H94" stroke="#cfccca" strokeWidth="1.600" />
  </Tile>
);
const FaceTime = () => (
  <Tile id="facetime" from="#87f081" to="#54bd42">
    <rect x="13" y="27" width="45" height="40" rx="12" fill="#eef5ec" /><path d="M62 43 L76 31 Q80 29 80 33 V61 Q80 65 76 63 L62 52Z" fill="#eef5ec" />
  </Tile>
);
const Messages = () => (
  <Tile id="messages" from="#87f081" to="#54bd42">
    <ellipse cx="46.500" cy="44.500" rx="34.500" ry="29" fill="#ebf3e8" /><path d="M28 66 C29 72 27 76 24 79 C31 79 38 76 41 71Z" fill="#e2ede0" />
  </Tile>
);
const Reminders = () => (
  <Tile id="reminders" from="#ffffff" to="#f2f0ed">
    {[['#2f7cf0', 24], ['#e3483b', 47], ['#ea9735', 70]].map(([c, y]) => (
      <g key={c}><circle cx="18.500" cy={y} r="7.200" fill="none" stroke={c} strokeWidth="1.600" /><circle cx="18.500" cy={y} r="4.800" fill={c} /><path d={`M35 ${y} H83`} stroke="#b9b9b9" strokeWidth="2" /></g>
    ))}
  </Tile>
);
const Music = () => (
  <Tile id="music" from="#f26c7f" to="#e7343c">
    <path d="M34 22 Q34 20 36 19.500 L65 14 Q68 13.500 68 16 V61 H64 V32 L38 37 V68 H34Z" fill="#fff" /><ellipse cx="28.500" cy="69.500" rx="9.500" ry="8" fill="#fff" /><ellipse cx="58.500" cy="63.500" rx="9.500" ry="8" fill="#fff" />
  </Tile>
);
const Podcasts = () => (
  <Tile id="podcasts" from="#bd6aee" to="#682ba6">
    <g fill="none" stroke="#fff" strokeWidth="4.500"><path d="M34 72 A32 32 0 1 1 60 72" /><path d="M35 58 A19.500 19.500 0 1 1 59 58" /></g><circle cx="47" cy="41.500" r="7.500" fill="#fff" /><path d="M39.500 59 Q39.500 52 47 52 Q54.500 52 54.500 59 L52 78 Q51 83 47 83 Q43 83 42 78Z" fill="#fff" />
  </Tile>
);
const Settings = () => (
  <Tile id="settings" from="#d8e1e6" to="#858381">
    <circle cx="47" cy="47" r="41" fill="#2a2b2c" /><circle cx="47" cy="47" r="37" fill="none" stroke="#9aa3a8" strokeWidth="4" strokeDasharray="2.200 1.675" /><circle cx="47" cy="47" r="31" fill="none" stroke="#a9b2b7" strokeWidth="5" />
    <circle cx="47" cy="47" r="21" fill="none" stroke="#6d7173" strokeWidth="6" strokeDasharray="2 1.300" /><circle cx="47" cy="47" r="17" fill="#4c4e50" /><path d="M47 47 H77 M47 47 L32 21 M47 47 L32 73" stroke="#b4bcc0" strokeWidth="4.500" /><circle cx="47" cy="47" r="4.500" fill="#c3cace" />
  </Tile>
);
const Petal = styled.rect`
  mix-blend-mode: multiply;
`;
const petals = ['#f39a2d', '#f1dd3c', '#a9cd48', '#68bb72', '#58a0dd', '#6f7cc4', '#b873bb', '#ee5a50'];
const Photos = () => (
  <Tile id="photos" from="#ffffff" to="#fafafa">
    {petals.map((c, i) => <Petal key={c} x="34.500" y="6" width="25" height="38" rx="12.500" fill={c} fillOpacity="0.880" transform={`rotate(${i * 45} 47 47)`} />)}
  </Tile>
);
const AppStore = () => (
  <Tile id="appstore" from="#50b9f1" to="#2358d0">
    <g stroke="#f6f9fc" strokeWidth="8" strokeLinecap="round"><path d="M18 57.500 H75" /><path d="M53.500 21 L33.500 55" /><path d="M41 21 L69.500 71.500" /><path d="M26 67 L23 72" /></g>
  </Tile>
);
const Maps = () => (
  <Tile id="maps" from="#f2f2f3" to="#e4e4e6">
    <path d="M0 0 H26 V42 L0 10Z" fill="#7fd36f" /><path d="M44 0 H94 V78 L44 34Z" fill="#6bd161" /><path d="M62 -2 C62 24 78 34 96 36" fill="none" stroke="#cdcdd1" strokeWidth="11" /><path d="M0 38 L22 60 V94 H0Z" fill="#e583c8" /><path d="M50 94 V70 L84 94Z" fill="#f5cb42" />
    <path d="M34.500 0 V45" stroke="#fff" strokeWidth="26" /><path d="M34.500 0 V45" stroke="#2f73e8" strokeWidth="20" />
    <circle cx="35" cy="58" r="24" fill="#eceef0" /><circle cx="35" cy="58" r="20" fill="#2f7af0" /><path d="M35 43 L46 70 L35 64 L24 70Z" fill="#fff" />
  </Tile>
);
const Tv = () => (
  <Tile id="tv" from="#263231" to="#0b0f12">
    <FaApple x="8" y="27" size={36} color="#fff" /><text x="42" y="61.500" fontSize="42" fontWeight="500" fill="#fff" fontFamily="Inter, sans-serif" textLength="39">tv</text>
  </Tile>
);
const Phone = () => (
  <Tile id="phone" from="#bcbdbd" to="#aeb0b0">
    <defs><linearGradient id="phone-screen" x1="0" y1="0" x2="0.300" y2="1"><stop offset="0" stopColor="#f2a98a" /><stop offset="0.450" stopColor="#ef8f92" /><stop offset="0.600" stopColor="#3ea0bd" /><stop offset="1" stopColor="#123a63" /></linearGradient></defs>
    <rect x="28" y="6.500" width="39" height="81" rx="8" fill="#111" /><rect x="30" y="8.500" width="35" height="77" rx="6.500" fill="url(#phone-screen)" /><path d="M30 78 C42 66 40 42 65 28 V33 C44 48 48 70 31 80Z" fill="#f6ddd6" opacity="0.800" /><rect x="42" y="10" width="11" height="4" rx="2" fill="#111" />
  </Tile>
);
const Chrome = () => (
  <Tile id="chrome" from="#f4f4f4" to="#f0f0f0">
    <path d="M11.500 26.500 L29.700 57 L64.300 57 L47 88 A41 41 0 0 1 11.500 26.500Z" fill="#4d9f56" /><path d="M11.500 26.500 A41 41 0 0 1 82.500 26.500 H47 L29.700 57Z" fill="#d6493a" /><path d="M47 26.500 H82.500 A41 41 0 0 1 47 88 L64.300 57Z" fill="#f2bd42" />
    <circle cx="47" cy="47" r="20" fill="#fff" /><circle cx="47" cy="47" r="16" fill="#4279e4" />
  </Tile>
);
const Brave = () => (
  <Tile id="brave" from="#ffffff" to="#ffffff"><SiBrave x="5" y="5" size={84} color="#de5431" /></Tile>
);
const pdfLoop = 'M45 40 C39 26 42 18 46 18 C51 19 51 34 44 50 C37 66 29 76 24 74 C18 70 30 60 47 56 C62 52 76 52 75 59 C73 65 60 61 52 51 C49 47 47 44 45 40Z';
const Acrobat = () => (
  <Tile id="acrobat" from="#a42416" to="#a01f13"><path d={pdfLoop} fill="none" stroke="#fff" strokeWidth="4.500" /></Tile>
);
const Terminal = () => (
  <Tile id="iterm" from="#cfe2ea" to="#6d6f70">
    <rect x="3" y="3.500" width="88" height="87" rx="19" fill="#060708" /><rect x="7" y="6" width="80" height="80" rx="15" fill="#151c20" />
    <text x="14" y="38" fontSize="26" fontWeight="700" fill="#66e04a" fontFamily="'Liberation Mono', monospace">$</text><rect x="34" y="17" width="3.500" height="25" fill="#4c8f3c" />
  </Tile>
);
const Code = () => (
  <Tile id="vscode" from="#ffffff" to="#ffffff">
    <path d="M61 14 V36 L21 66 Q18 68 16 65 L13 61 Q12 59 14 57Z" fill="#2868ae" /><path d="M61 80 V58 L21 29 Q18 27 16 30 L13 33 Q12 36 14 38Z" fill="#3079c4" /><path d="M61 14 L76 20 Q79 21.500 79 25 V69 Q79 72.500 76 74 L61 80Z" fill="#4a9cec" />
  </Tile>
);
const MinimizedDoc = () => (
  <svg width="108" height="100" viewBox="0 0 108 100">
    <rect y="16" width="108" height="62" fill="#29292b" /><rect y="16" width="108" height="5" fill="#3a3a3d" /><rect x="92" y="17" width="8" height="2" fill="#c0453a" /><rect x="26" y="21.500" width="57" height="56.500" fill="#f4f4f4" /><path d="M26 26 H83" stroke="#55555a" />
    <path d="M60 31 H77 M31 36 H52 M56 36 H77 M31 39 H52 M56 39 H77 M31 42 H52 M56 42 H77 M31 48 H77 M31 52 H77 M31 56 H77 M31 60 H77 M31 64 H77 M31 68 H77 M31 72 H77" stroke="#b4b4b8" strokeWidth="1.200" strokeDasharray="9 1.500 14 1.500" />
    <rect x="71" y="64" width="36" height="35" rx="8" fill="#a42416" /><path transform="translate(71 64) scale(0.378)" d={pdfLoop} fill="none" stroke="#fff" strokeWidth="5.500" />
  </svg>
);
const Trash = () => (
  <svg width="84" height="108" viewBox="0 0 84 108">
    <defs><linearGradient id="can"><stop offset="0" stopColor="#5b6064" /><stop offset="0.250" stopColor="#8a8f93" /><stop offset="0.550" stopColor="#5c6165" /><stop offset="0.850" stopColor="#7c8185" /><stop offset="1" stopColor="#45494c" /></linearGradient></defs>
    <path d="M1 14 L10 98 Q12 107 41 107 Q70 107 72 98 L82 14Z" fill="url(#can)" /><ellipse cx="41.500" cy="14" rx="40.500" ry="9" fill="#3c4043" stroke="#9b9fa2" strokeWidth="1.500" />
    <path d="M10 12 L18 4 L26 6 L29 1 L38 6 L46 8 L51 2 L58 9 L66 4 L72 12 L68 21 L58 18 L52 24 L40 21 L30 23 L22 17 L13 19Z" fill="#e2e2e0" />
    <path d="M18 6 L24 16 L30 4 M40 8 L36 20 M58 10 L64 18 L70 10 M20 12 L12 15" fill="none" stroke="#6b6d70" strokeWidth="1.800" /><path d="M48 4 L56 12 L52 22 L44 16Z" fill="#7b5a58" /><path d="M50 8 L54 14 L50 16Z" fill="#3c7fd0" /><circle cx="31" cy="13" r="4" fill="#4cc3cf" /><path d="M54 16 L60 14 L60 20Z" fill="#d9822f" /><path d="M36 16 L40 12 L40 22Z" fill="#c23a55" />
  </svg>
);

const apps = [
  [Finder, true], [Siri], [Launchpad], [Safari, true], [Mail, true], [Contacts], [CalendarTile], [Notes], [FaceTime], [Messages],
  [Reminders, false, '13'], [Music], [Podcasts], [Settings, true], [Photos], [AppStore], [Maps], [Tv], [Phone],
];
const openApps = [Chrome, Brave, Acrobat, Terminal, Code];

/* ---------- composition ---------- */

const statusIcons = [
  [DropboxStatus, 38, 35], [CloudStatus, 40, 44], [MalwareStatus, 32, 40], [PlayStatus, 28, 36], [BatteryStatus, 52, 37], [WifiStatus, 34, 39],
  [AccountStatus, 28, 42], [TimeMachineStatus, 30, 43], [SearchStatus, 26, 39], [ControlStatus, 28, 36],
];

function SystemMenu() {
  return (
    <MenuBar>
      <MenuApple><FaApple size={33} /></MenuApple>
      {menus.map(([label, w, ls, bold]) => <MenuItem key={label} $w={w} $ls={ls} $bold={bold}>{label}</MenuItem>)}
      <StatusItems>
        {statusIcons.map(([Icon, w, gap], i) => <StatusIcon key={i} $w={w} $gap={gap}><Icon /></StatusIcon>)}
        <StatusIcon $w={28} $gap={31}><SiriOrb size={28} /></StatusIcon>
        <MenuItem $w={171} $ls={0.0142}>Mar 16., Sun</MenuItem>
        <MenuItem $w={108} $ls={0.041}>12:22</MenuItem>
      </StatusItems>
    </MenuBar>
  );
}

function BrowserChrome() {
  return (
    <>
      <TabStrip>
        <TrafficLights><Light $c="#ed6a5e" /><Light $c="#f4bd4f" /><Light $c="#61c554" /></TrafficLights>
        <ReplitMark />
        <ActiveTab><X size={22} strokeWidth={3.2} /></ActiveTab>
        {pinned.map((Icon, i) => <PinnedTab key={i} $tight={i > 9}><Icon /></PinnedTab>)}
        <NewTab><Plus size={29} strokeWidth={3} /></NewTab>
        <TabSearch><ChevronDown size={26} strokeWidth={4} /></TabSearch>
      </TabStrip>
      <Toolbar>
        <NavIcon><MdArrowBack size={36} /></NavIcon>
        <NavIcon $off><MdArrowForward size={36} /></NavIcon>
        <NavIcon><MdRefresh size={36} /></NavIcon>
        <NavIcon><HomeNav /></NavIcon>
        <Omnibox>
          <SiteInfo><Tune /></SiteInfo>
          <Url>491f404d-c45b-465e-abd0-1bf1a522988f-00-1vx2q8nj9olr6.janeway.replit.dev<em>/yacht/yacht-IPwWfOoHOkgkJimhvPwABhyZ3Kn1-1742110450000</em></Url>
          <OmniIcons><Pin /><MdZoomOut size={37} /><MdStarOutline size={37} /></OmniIcons>
        </Omnibox>
        <Extensions>
          <Ext $gap={41}><GreenExt /></Ext>
          <Ext $gap={42}><Fox /></Ext>
          <Ext $gap={33}><Puzzle /></Ext>
          <ToolDivider />
          <Ext $gap={48}><Avatar /></Ext>
          <Dots />
        </Extensions>
      </Toolbar>
    </>
  );
}

function Booking() {
  return (
    <BookingCard>
      <Text as="h2" $s={36} $w={600} $ls={-0.0608} $lh={50}>Book This Experience</Text>
      <PriceRow>
        <Text $c={muted} $ls={-0.0225}>Base Price</Text>
        <Price><Text $s={36} $w={700} $ls={0.004}>$1500</Text><Text $s={21} $c={muted} $ls={-0.05}>/day</Text></Price>
      </PriceRow>
      <Divider />
      <Text as="h3" $s={21} $w={500} $ls={-0.0119} $lh={30}>Schedule Your Experience</Text>
      <Text $s={18} $c={muted} $lh={27} $mt={9}>Select a date and available time slot for your booking.</Text>
      <Picker><Calendar size={24} /><Text $s={21} $c={muted} $ls={-0.01}>Select date</Text></Picker>
      <Picker $disabled><Clock size={24} /><Text $s={21} $c={muted} $ls={-0.01}>Select time slot</Text></Picker>
      <BookButton><Text $s={21} $w={500} $c="#fafaf9" $ls={-0.0185}>Book Now</Text></BookButton>
    </BookingCard>
  );
}

function YachtPage() {
  return (
    <Page>
      <SiteHeader>
        <SiteLogo />
        <Account>
          <EnvBadge><Cloud size={20} /><Text $s={18} $w={600} $ls={0.018} $c="#f3f5f8" $lh={32}>Production</Text></EnvBadge>
          <Text $s={21} $w={500} $ls={-0.008}>Logout</Text>
        </Account>
      </SiteHeader>
      <SubHeader><Menu size={24} /></SubHeader>
      <Content>
        <BackLink><ArrowLeft size={24} /><Text $s={21} $w={500} $ls={-0.0047}>Back to Search</Text></BackLink>
        <Gallery>
          <BrokenImage /><Text $ls={-0.0196} $lh={36}>Abu Dhabi Grand Tour Yacht - Photo 1</Text>
          <SlideButton $side="left"><ArrowLeft size={24} /></SlideButton>
          <SlideButton $side="right"><ArrowRight size={24} /></SlideButton>
        </Gallery>
        <Columns>
          <div>
            <TitleRow>
              <Title>Abu Dhabi Grand Tour Yacht</Title>
              <Rating><Star size={30} color="#e2b33f" fill="#e2b33f" /><Text $w={500} $ls={-0.045}>New</Text></Rating>
            </TitleRow>
            <Tags>{tags.map(([t, w, ls]) => <Tag key={t} $w={w} $ls={ls}>{t}</Tag>)}</Tags>
            <Location><MapIcon size={24} /><Text $c={muted} $ls={-0.0208}>Zayed Port, Abu Dhabi, UAE</Text></Location>
            <Stats>
              {stats.map(([Icon, label, value, l1, l2]) => (
                <Stat key={label}>
                  <Icon size={30} />
                  <Text $s={21} $c={muted} $ls={l1} $lh={30}>{label}</Text>
                  <Text $w={500} $ls={l2}>{value}</Text>
                </Stat>
              ))}
            </Stats>
            <TabList>
              {tabs.map(([t, ls, active]) => (
                <Tab key={t} $active={active}><Text $s={21} $w={500} $ls={ls} $c={active ? ink : muted}>{t}</Text></Tab>
              ))}
            </TabList>
            <Description>
              Explore the magnificent Abu Dhabi skyline and coastal landmarks on this luxury yacht tour. Perfect for sightseeing and photography enthusiasts.
            </Description>
          </div>
          <Booking />
        </Columns>
        <Similar>
          <Text as="h2" $s={36} $w={700} $ls={-0.0275} $lh={54}>Similar Experiences</Text>
          <Text $c={muted} $ls={-0.0228} $mt={10}>You might also be interested in these yacht experiences</Text>
        </Similar>
      </Content>
      <BottomNav>
        {nav.map(([Icon, label]) => (
          <NavItem key={label}><Icon size={24} /><Text $s={18} $w={500} $lh={27}>{label}</Text></NavItem>
        ))}
      </BottomNav>
      <EdgeShade />
    </Page>
  );
}

function Dock() {
  return (
    <DockBar>
      {apps.map(([Icon, running, count], i) => (
        <DockItem key={i} $running={running}><Icon />{count && <Count>{count}</Count>}</DockItem>
      ))}
      <DockDivider $r={13} />
      {openApps.map((Icon, i) => <DockItem key={i} $running><Icon /></DockItem>)}
      <DockDivider $r={4} />
      <DockItem $w={106}><MinimizedDoc /></DockItem>
      <DockItem $w={84} $mt={-8}><Trash /></DockItem>
    </DockBar>
  );
}

export default function App() {
  return (
    <>
      <GlobalStyle />
      <Desktop>
        <BackWindow $x={24} $y={300} $w={3480} $h={1772} $bg="#0e0e0e" $edge="#1c1c1c" />
        <BackWindow $x={3000} $y={51} $w={600} $h={2017} $bg="linear-gradient(to bottom, #101010 0, #101010 160px, #000 160px, #000 162px, #0c0c0c 163px)" />
        <BackWindow $x={3000} $y={50} $w={567} $h={2016} $r={22} $edge="#777" $bg="linear-gradient(to bottom, #cfc7c5 0, #b5afae 90px, #aaa6a5 172px, #666 174px, #5a5a5a 500px, #777 1600px, #8a8a8a)" />
        <SystemMenu />
        <BrowserWindow>
          <BrowserChrome />
          <YachtPage />
        </BrowserWindow>
        <Dock />
      </Desktop>
    </>
  );
}
